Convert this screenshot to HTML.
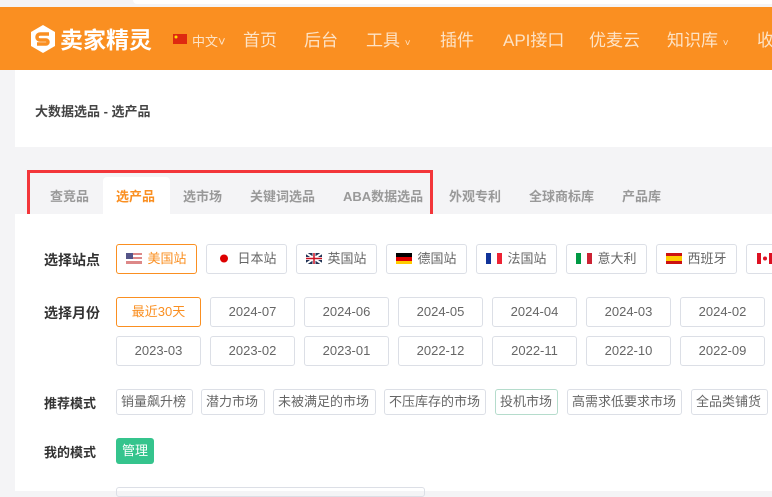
<!DOCTYPE html>
<html><head><meta charset="utf-8">
<style>
*{margin:0;padding:0;box-sizing:border-box}
body{width:772px;height:491px;overflow:hidden;background:#f4f4f6;font-family:"Liberation Sans","Noto Sans CJK SC",sans-serif;position:relative}
.top{position:absolute;left:0;top:0;width:772px;height:7px;background:#f4f4f6}
.top:after{content:"";position:absolute;left:133px;top:0;width:700px;height:4px;background:#fff;border-radius:0 0 0 6px}
.hdr{position:absolute;left:0;top:7px;width:772px;height:63px;background:#fa8f21;color:#fde3c6}
.hdr span{position:absolute;top:23px;font-size:17px;line-height:22px;white-space:nowrap}
.logo{position:absolute;left:30px;top:16px}
.bc{position:absolute;left:15px;top:70px;width:757px;height:77px;background:#fff}
.bc div{position:absolute;left:20px;top:31px;font-size:13px;color:#444;font-weight:bold}
.tabs{position:absolute;left:27px;top:170px;width:406px;height:55px;border:3px solid #f3363a}
.tab{position:absolute;top:186px;font-size:13px;font-weight:bold;color:#999;white-space:nowrap}
.act{position:absolute;left:103px;top:177px;width:67px;height:38px;background:#fff;border-radius:4px 4px 0 0}
.panel{position:absolute;left:15px;top:214px;width:757px;height:277px;background:#fff}
.lab{position:absolute;left:44px;font-size:14px;font-weight:bold;color:#333}
.b{position:absolute;height:30px;border:1px solid #dcdfe6;border-radius:3px;font-size:13px;color:#666;text-align:center;line-height:28px;background:#fff;white-space:nowrap;overflow:hidden}
.t{position:absolute;top:389px;height:26px;border:1px solid #dcdfe6;border-radius:3px;font-size:13px;color:#666;line-height:24px;padding:0 4px;background:#fff;white-space:nowrap}
.f{display:inline-block;width:16px;height:11px;vertical-align:-1px;margin-right:5px}
</style></head><body>
<div class="top"></div>
<div class="hdr">
<svg class="logo" width="26" height="32" viewBox="0 0 26 28"><path d="M13 0L25 7V21L13 28L1 21V7Z" fill="#fff"/><path d="M19 9H10a3 3 0 0 0 0 6h6a2 2 0 0 1 0 4H7" stroke="#fa8f21" stroke-width="3.5" fill="none"/></svg>
<span style="left:60px;top:18px;font-size:23px;line-height:30px;font-weight:bold;color:#fff">卖家精灵</span>
<svg style="position:absolute;left:173px;top:27px" width="14" height="10"><rect width="14" height="10" fill="#de2910"/><circle cx="3" cy="3" r="1.5" fill="#ffde00"/></svg>
<span style="left:192px;top:24px;font-size:13px">中文˅</span>
<span style="left:243px">首页</span>
<span style="left:304px">后台</span>
<span style="left:366px">工具 <small style="font-size:10px">˅</small></span>
<span style="left:440px">插件</span>
<span style="left:503px">API接口</span>
<span style="left:589px">优麦云</span>
<span style="left:667px">知识库 <small style="font-size:10px">˅</small></span>
<span style="left:757px">收</span>
</div>
<div class="bc"><div>大数据选品 - 选产品</div></div>
<div class="act"></div>
<div class="tabs"></div>
<span class="tab" style="left:50px">查竞品</span>
<span class="tab" style="left:116px;color:#fa8f21">选产品</span>
<span class="tab" style="left:183px">选市场</span>
<span class="tab" style="left:250px">关键词选品</span>
<span class="tab" style="left:343px">ABA数据选品</span>
<span class="tab" style="left:449px">外观专利</span>
<span class="tab" style="left:529px">全球商标库</span>
<span class="tab" style="left:622px">产品库</span>
<div class="panel"></div>
<div class="lab" style="top:250px">选择站点</div>
<div class="b" style="left:116px;top:244px;width:81px;border-color:#fa8f21;color:#fa8f21"><svg class="f"><rect width="16" height="11" fill="#d88"/><rect y="2" width="16" height="2" fill="#fff"/><rect y="6" width="16" height="2" fill="#fff"/><rect width="7" height="6" fill="#558"/></svg>美国站</div>
<div class="b" style="left:206px;top:244px;width:81px"><svg class="f"><circle cx="8" cy="5.5" r="4" fill="#d00"/></svg>日本站</div>
<div class="b" style="left:296px;top:244px;width:81px"><svg class="f"><rect width="16" height="11" fill="#235"/><path d="M0 0L16 11M16 0L0 11" stroke="#fff" stroke-width="2"/><path d="M8 0V11M0 5.5H16" stroke="#fff" stroke-width="3"/><path d="M8 0V11M0 5.5H16" stroke="#c12" stroke-width="1.5"/></svg>英国站</div>
<div class="b" style="left:386px;top:244px;width:81px"><svg class="f"><rect width="16" height="4" fill="#000"/><rect y="4" width="16" height="4" fill="#d00"/><rect y="8" width="16" height="3" fill="#fc0"/></svg>德国站</div>
<div class="b" style="left:476px;top:244px;width:81px"><svg class="f"><rect width="5" height="11" fill="#139"/><rect x="5" width="6" height="11" fill="#fff"/><rect x="11" width="5" height="11" fill="#e23"/></svg>法国站</div>
<div class="b" style="left:566px;top:244px;width:81px"><svg class="f"><rect width="5" height="11" fill="#094"/><rect x="5" width="6" height="11" fill="#fff"/><rect x="11" width="5" height="11" fill="#c23"/></svg>意大利</div>
<div class="b" style="left:656px;top:244px;width:81px"><svg class="f"><rect width="16" height="11" fill="#c11"/><rect y="3" width="16" height="5" fill="#fc0"/></svg>西班牙</div>
<div class="b" style="left:746px;top:244px;width:81px;text-align:left;padding-left:10px"><svg class="f"><rect width="16" height="11" fill="#fff"/><rect width="4" height="11" fill="#d12"/><rect x="12" width="4" height="11" fill="#d12"/><circle cx="8" cy="5.5" r="2" fill="#d12"/></svg></div>
<div class="lab" style="top:303px">选择月份</div>
<div class="b" style="left:116px;top:297px;width:85px;border-color:#fa8f21;color:#fa8f21">最近30天</div>
<div class="b" style="left:210px;top:297px;width:85px">2024-07</div>
<div class="b" style="left:304px;top:297px;width:85px">2024-06</div>
<div class="b" style="left:398px;top:297px;width:85px">2024-05</div>
<div class="b" style="left:492px;top:297px;width:85px">2024-04</div>
<div class="b" style="left:586px;top:297px;width:85px">2024-03</div>
<div class="b" style="left:680px;top:297px;width:85px">2024-02</div>
<div class="b" style="left:116px;top:336px;width:85px">2023-03</div>
<div class="b" style="left:210px;top:336px;width:85px">2023-02</div>
<div class="b" style="left:304px;top:336px;width:85px">2023-01</div>
<div class="b" style="left:398px;top:336px;width:85px">2022-12</div>
<div class="b" style="left:492px;top:336px;width:85px">2022-11</div>
<div class="b" style="left:586px;top:336px;width:85px">2022-10</div>
<div class="b" style="left:680px;top:336px;width:85px">2022-09</div>
<div class="lab" style="top:393px;font-size:13px">推荐模式</div>
<div class="t" style="left:116px;width:77px">销量飙升榜</div>
<div class="t" style="left:201px;width:64px">潜力市场</div>
<div class="t" style="left:273px;width:103px">未被满足的市场</div>
<div class="t" style="left:384px;width:102px">不压库存的市场</div>
<div class="t" style="left:495px;width:63px;border-color:#b5dccc">投机市场</div>
<div class="t" style="left:567px;width:115px">高需求低要求市场</div>
<div class="t" style="left:691px;width:77px">全品类铺货</div>
<div class="lab" style="top:442px;font-size:13px">我的模式</div>
<div style="position:absolute;left:116px;top:438px;width:38px;height:26px;background:#35c48d;border-radius:3px;color:#fff;font-size:13px;line-height:26px;text-align:center">管理</div>
<div style="position:absolute;left:116px;top:487px;width:309px;height:10px;border:1px solid #dcdfe6;border-radius:3px"></div>
</body></html>
